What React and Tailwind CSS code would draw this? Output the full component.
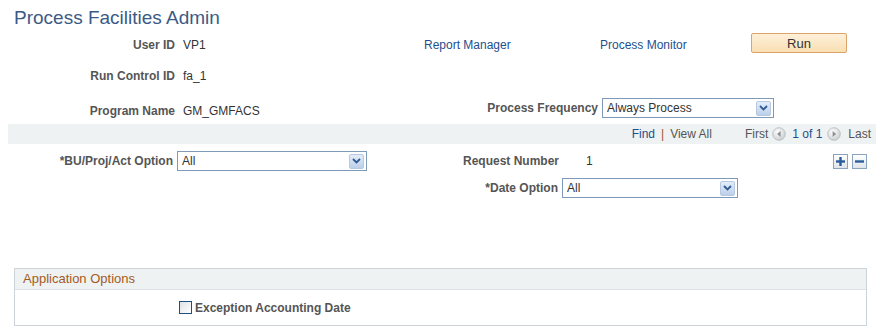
import React from "react";

/* ── small drawings ── */
function DropButton() {
  return (
    <span className="flex h-[15px] w-[15px] items-center justify-center rounded-[2px] border border-[#b7c9e2] bg-gradient-to-b from-[#e4edf9] to-[#bccfe9]">
      <svg width="9" height="6" viewBox="0 0 9 6">
        <path d="M1 1 L4.5 4.5 L8 1" fill="none" stroke="#2f5a92" strokeWidth="1.8" />
      </svg>
    </span>
  );
}

function Select({ value, className = "" }) {
  return (
    <div
      className={`flex h-[20px] items-center justify-between border border-[#7f9ab9] bg-white pl-[4px] pr-[2px] ${className}`}
    >
      <span className="text-[12px] text-[#333]">{value}</span>
      <DropButton />
    </div>
  );
}

function NavCircle({ dir }) {
  return (
    <svg width="14" height="14" viewBox="0 0 14 14">
      <defs>
        <radialGradient id={`g${dir}`} cx="40%" cy="35%" r="70%">
          <stop offset="0" stopColor="#ffffff" />
          <stop offset="1" stopColor="#c9ccce" />
        </radialGradient>
      </defs>
      <circle cx="7" cy="7" r="6.3" fill={`url(#g${dir})`} stroke="#b5b9bc" strokeWidth="0.8" />
      {dir === "left" ? (
        <path d="M8.6 4 L5 7 L8.6 10 Z" fill="#8d9194" />
      ) : (
        <path d="M5.6 4 L9.2 7 L5.6 10 Z" fill="#8d9194" />
      )}
    </svg>
  );
}

function RowButton({ plus }) {
  return (
    <span className="flex h-[15px] w-[15px] items-center justify-center border border-[#8aa3bf] bg-gradient-to-b from-[#ffffff] to-[#dfe5ea]">
      <svg width="11" height="11" viewBox="0 0 11 11">
        <rect x="1" y="4.3" width="9" height="2.4" fill="#2b5d9c" />
        {plus && <rect x="4.3" y="1" width="2.4" height="9" fill="#2b5d9c" />}
      </svg>
    </span>
  );
}

const label = "text-[12px] font-bold text-[#555] whitespace-nowrap";
const value = "text-[12px] text-[#333] whitespace-nowrap";
const link = "text-[12px] text-[#1d4f8f] whitespace-nowrap";

export default function App() {
  return (
    <div
      className="h-[335px] w-[883px] overflow-hidden bg-white"
      style={{ fontFamily: '"Liberation Sans", Arial, sans-serif' }}
    >
      {/* ── Title ── */}
      <div className="h-[30px] pl-[14px] pt-[7px] text-[19px] leading-[22px] text-[#3c5a86]">
        Process Facilities Admin
      </div>

      {/* ── User ID row ── */}
      <div className="flex h-[30px] items-center">
        <div className={`w-[175px] text-right ${label}`}>User ID</div>
        <div className={`ml-[8px] w-[241px] ${value}`}>VP1</div>
        <div className={`w-[176px] ${link}`}>Report Manager</div>
        <div className={`w-[151px] ${link}`}>Process Monitor</div>
        <button className="-mt-[4px] h-[20px] w-[96px] rounded-[2px] border border-[#dca46a] bg-gradient-to-b from-[#fdf0d9] to-[#f9dfb2] text-[13px] text-[#333]">
          Run
        </button>
      </div>

      {/* ── Run Control row ── */}
      <div className="flex h-[32px] items-center">
        <div className={`w-[175px] text-right ${label}`}>Run Control ID</div>
        <div className={`ml-[8px] ${value}`}>fa_1</div>
      </div>

      {/* ── Program row ── */}
      <div className="flex h-[32px] items-center">
        <div className={`mt-[6px] w-[175px] text-right ${label}`}>Program Name</div>
        <div className={`mt-[6px] ml-[8px] w-[300px] ${value}`}>GM_GMFACS</div>
        <div className={`w-[115px] text-right ${label}`}>Process Frequency</div>
        <Select value="Always Process" className="ml-[4px] w-[172px]" />
      </div>

      {/* ── Grid nav band ── */}
      <div className="mx-[8px] flex h-[20px] w-[868px] items-center justify-end bg-[#eff2f3] pr-[5px] text-[12px]">
        <span className="text-[#1d4f8f]">Find</span>
        <span className="mx-[6px] text-[#a0522d]">|</span>
        <span className="text-[#555]">View All</span>
        <span className="ml-[33px] text-[#555]">First</span>
        <span className="ml-[4px] flex">
          <NavCircle dir="left" />
        </span>
        <span className="ml-[6px] text-[#1d4f8f]">1 of 1</span>
        <span className="ml-[5px] flex">
          <NavCircle dir="right" />
        </span>
        <span className="ml-[7px] text-[#555]">Last</span>
      </div>

      {/* ── BU / Request row ── */}
      <div className="mt-[4px] flex h-[26px] items-center">
        <div className={`w-[173px] text-right ${label}`}>*BU/Proj/Act Option</div>
        <Select value="All" className="ml-[4px] w-[190px]" />
        <div className={`ml-[96px] w-[123px] ${label}`}>Request Number</div>
        <div className={`w-[247px] ${value}`}>1</div>
        <div className="flex gap-[4px]">
          <RowButton plus />
          <RowButton />
        </div>
      </div>

      {/* ── Date option row ── */}
      <div className="mt-[1px] flex h-[26px] items-center">
        <div className={`w-[558px] text-right ${label}`}>*Date Option</div>
        <Select value="All" className="ml-[4px] w-[176px]" />
      </div>

      {/* ── Application Options ── */}
      <div className="mt-[67px] ml-[14px] w-[853px] border border-[#cdd3d9]">
        <div className="flex h-[21px] items-center border-b border-[#dde1e4] bg-[#eff2f3] pl-[8px] text-[13px] text-[#a45a1e]">
          Application Options
        </div>
        <div className="flex h-[35px] items-center pl-[164px]">
          <span className="h-[13px] w-[13px] border border-[#1f4f82] bg-gradient-to-br from-[#dfe2e5] to-[#ffffff]" />
          <span className={`ml-[3px] ${label}`}>Exception Accounting Date</span>
        </div>
      </div>
    </div>
  );
}
